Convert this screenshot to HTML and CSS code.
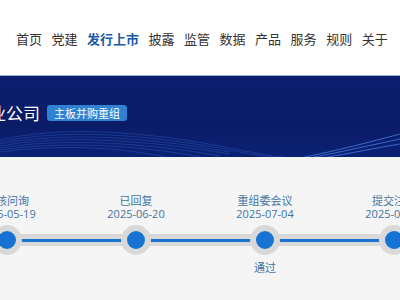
FILE: index.html
```html
<!DOCTYPE html>
<html lang="zh">
<head>
<meta charset="utf-8">
<link rel="stylesheet" href="styles.css">
</head>
<body>
<header class="top">
  <nav class="nav">
    <a>首页</a><a>党建</a><a class="active">发行上市</a><a>披露</a><a>监管</a><a>数据</a><a>产品</a><a>服务</a><a>规则</a><a>关于</a>
  </nav>
</header>
<section class="banner">
  <svg class="waves" width="400" height="82" viewBox="0 0 400 82" preserveAspectRatio="none">
    <g fill="none" stroke="#3f74d8" stroke-width="0.6" opacity="0.55">
      <path d="M0 64 C60 50 140 54 230 72 C260 78 280 82 300 82"/>
      <path d="M0 66 C60 53 140 57 230 74 C260 80 280 83 300 83"/>
      <path d="M0 68 C60 56 140 60 230 76"/>
      <path d="M0 70 C60 59 140 63 230 78"/>
      <path d="M0 72 C60 62 140 66 220 80"/>
      <path d="M0 74 C60 65 140 69 200 81"/>
      <path d="M0 76 C60 68 120 71 170 82"/>
    </g>
    <g fill="none" stroke="#4f8bf0" stroke-width="1" opacity="0.7">
      <path d="M300 82 C340 74 370 66 400 58"/>
      <path d="M310 82 C345 75 372 69 400 63"/>
      <path d="M322 82 C352 77 376 72 400 68"/>
    </g>
  </svg>
  <div class="banner-row">
    <h1 class="title">企业公司</h1>
    <span class="badge">主板并购重组</span>
  </div>
</section>
<section class="timeline">
  <div class="steps">
    <div class="step">
      <div class="label">审核问询</div>
      <div class="date">2025-05-19</div>
      <div class="node"><span class="dot"></span></div>
    </div>
    <div class="step">
      <div class="label">已回复</div>
      <div class="date">2025-06-20</div>
      <div class="node"><span class="dot"></span></div>
    </div>
    <div class="step">
      <div class="label">重组委会议</div>
      <div class="date">2025-07-04</div>
      <div class="node"><span class="dot"></span></div>
      <div class="result">通过</div>
    </div>
    <div class="step">
      <div class="label">提交注册</div>
      <div class="date">2025-07-10</div>
      <div class="node"><span class="dot"></span></div>
    </div>
  </div>
</section>
</body>
</html>
```
FILE: styles.css
```css
html, body {
  margin: 0;
  padding: 0;
}
body {
  width: 400px;
  height: 300px;
  overflow: hidden;
  font-family: "Noto Sans CJK SC", "Noto Sans", sans-serif;
  background: #f5f5f5;
}
.top {
  height: 75px;
  background: #ffffff;
  display: flex;
  align-items: center;
}
.nav {
  display: flex;
  gap: 9.5px;
  padding-left: 16px;
  white-space: nowrap;
  margin-top: 2px;
}
.nav a {
  font-size: 13px;
  line-height: 18px;
  color: #333333;
}
.nav a.active {
  color: #1a5ca8;
  font-weight: bold;
}
.banner {
  position: relative;
  height: 82px;
  background: linear-gradient(180deg, #0b1f6f 0%, #0a1c68 60%, #0b2174 100%);
  border-top: 1px solid #9fb0c8;
  box-sizing: border-box;
  overflow: hidden;
}
.waves {
  position: absolute;
  left: 0;
  top: 0;
}
.banner-row {
  position: relative;
  display: flex;
  align-items: center;
  gap: 7px;
  padding-top: 26px;
  margin-left: -28px;
}
.title {
  margin: 0;
  font-size: 17px;
  line-height: 22px;
  font-weight: normal;
  color: #ffffff;
}
.badge {
  background: #2f82d2;
  color: #ffffff;
  font-size: 11px;
  line-height: 16px;
  padding: 0 7px;
  border-radius: 3px;
}
.timeline {
  height: 143px;
  overflow: hidden;
}
.steps {
  display: flex;
  margin-left: -57.5px;
  padding-top: 37px;
}
.step {
  flex: 0 0 129px;
  display: flex;
  flex-direction: column;
  align-items: center;
  color: #4274a2;
}
.label {
  font-size: 11px;
  line-height: 13px;
}
.date {
  font-size: 11px;
  line-height: 13px;
  font-family: "Open Sans", "Noto Sans", sans-serif;
}
.node {
  position: relative;
  align-self: stretch;
  height: 30px;
  margin-top: 5px;
  display: flex;
  justify-content: center;
  align-items: center;
}
.node::before {
  content: "";
  position: absolute;
  left: 0;
  right: 0;
  top: 9px;
  height: 12px;
  background: #d9d9d9;
}
.node::after {
  content: "";
  position: absolute;
  left: 0;
  right: 0;
  top: 13.5px;
  height: 3px;
  background: #1a73cf;
}
.dot {
  position: relative;
  z-index: 1;
  width: 18px;
  height: 18px;
  border-radius: 50%;
  background: #1673d3;
  border: 6px solid #d9d9d9;
}
.result {
  margin-top: 5px;
  font-size: 11px;
  line-height: 14px;
}
```
